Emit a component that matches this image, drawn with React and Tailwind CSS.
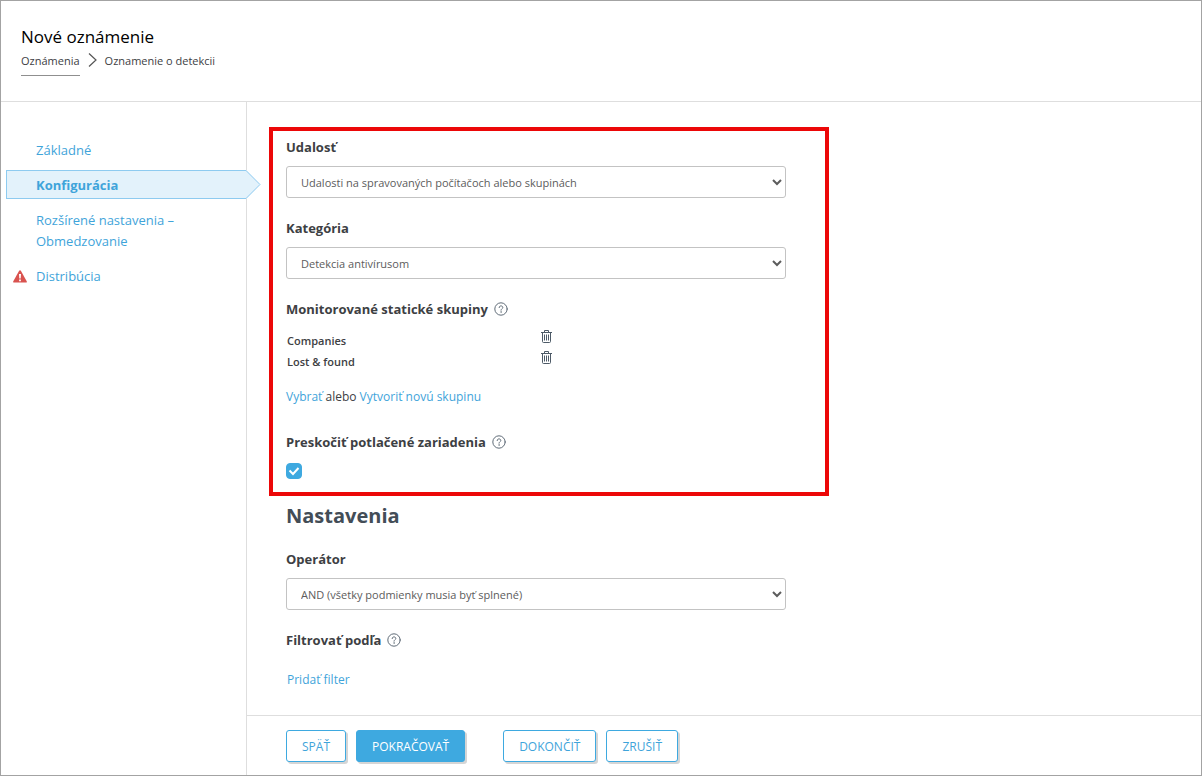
import React from "react";

function HelpButton({ label }) {
  return (
    <button type="button" aria-label={label} className="pb-px text-[#5f6b77]">
      <svg className="block" width="14" height="14" viewBox="0 0 14 14" fill="none" stroke="currentColor" strokeLinecap="round">
        <circle cx="7" cy="7" r="6.200" strokeWidth="1" />
        <path d="M5.200 5.600C5.200 4.500 6 3.900 7 3.900s1.800.6 1.800 1.600C8.800 6.700 7 6.800 7 8.200" strokeWidth="1" />
        <circle cx="7" cy="10" r=".3" strokeWidth=".7" />
      </svg>
    </button>
  );
}

function SelectField({ id, label, options }) {
  return (
    <div className="flex max-w-[500px] flex-col gap-2">
      <label htmlFor={id} className="text-[13px] leading-[21px] font-bold text-[#3d4043]">
        {label}
      </label>
      <div className="relative">
        <select
          id={id}
          className="block h-8 w-full appearance-none rounded-[3px] border border-[#c3c3c3] bg-white pt-0.5 pr-8 pl-3.5 text-[11px] text-[#5c5c5c]"
        >
          {options.map((o) => (
            <option key={o}>{o}</option>
          ))}
        </select>
        <svg
          className="pointer-events-none absolute top-3 right-1"
          width="10"
          height="8"
          viewBox="0 0 10 8"
          fill="none"
          stroke="#5c5c5c"
          strokeWidth="2"
        >
          <path d="M1 2L5 6L9 2" />
        </svg>
      </div>
    </div>
  );
}

function TrashIcon() {
  return (
    <svg width="11" height="13" viewBox="0 0 11 13" fill="none" stroke="#4d5a67">
      <path d="M0 2.500H11M3.500 2.500V.5H7.500V2.500" />
      <path d="M1.500 2.500V11.500Q1.500 12.500 2.500 12.500H8.500Q9.500 12.500 9.500 11.500V2.500" />
      <path d="M3.500 4.500V10.500M5.500 4.500V10.500M7.500 4.500V10.500" />
    </svg>
  );
}

const groups = ["Companies", "Lost & found"];

const link = "text-[#3fa4da]";
const heading = "text-[13px] leading-[21px] font-bold text-[#3d4043]";
const button =
  "h-8 rounded-[3px] border border-[#3ea9e0] px-[15px] pt-0.5 text-[12px] shadow-[2px_2px_0_#d5d5d5]";

function Sidebar() {
  return (
    <nav className="w-[246px] shrink-0 border-r border-[#dedede] pt-[38px] text-[13px] leading-[21px]">
      <ul className="flex flex-col">
        <li className="pr-10 pl-[35px]">
          <a href="#basic" className={link}>Základné</a>
        </li>
        <li className="relative mt-[9px] mb-[11px] ml-[5px] flex h-[29px] items-center border-y border-l border-[#8ecbf0] bg-[#e3f2fb] pt-0.5 pl-[29px]">
          <a href="#configuration" aria-current="page" className="font-bold text-[#3fa4da]">Konfigurácia</a>
          <svg className="absolute -top-px -right-[15px]" width="15" height="29" viewBox="0 0 15 29">
            <path d="M0 0L14 14.500L0 29Z" fill="#e3f2fb" />
            <path d="M0 .5L14 14.500L0 28.500" fill="none" stroke="#8ecbf0" />
          </svg>
        </li>
        <li className="pr-10 pl-[35px]">
          <a href="#advanced" className={link}>Rozšírené nastavenia – Obmedzovanie</a>
        </li>
        <li className="mt-3.5 flex items-center gap-[9px] pl-3">
          <svg width="14" height="13" viewBox="0 0 14 13">
            <path d="M7 .3Q7.600 .3 8 1L13.700 11.300Q14.200 12.500 13 12.500H1Q-.2 12.500 .3 11.300L6 1Q6.400 .3 7 .3Z" fill="#d9534f" />
            <path d="M6 4H8L7.700 8.500H6.300ZM6.100 9.500H7.900V11.200H6.100Z" fill="#fff" />
          </svg>
          <a href="#distribution" className={link}>Distribúcia</a>
        </li>
      </ul>
    </nav>
  );
}

export default function App() {
  return (
    <div className="flex min-h-screen flex-col border border-[#a3a3a3] bg-white font-['Open_Sans','Noto_Sans',sans-serif] text-[#3d4043]">
      <header className="h-[101px] border-b border-[#dedede] px-5 pt-6">
        <h1 className="text-[17px] leading-6 text-black">Nové oznámenie</h1>
        <nav className="flex text-[11px] leading-6">
          <a href="#notifications" className="h-[27px] border-b border-[#8f8f8f]">Oznámenia</a>
          <svg className="mx-2 mt-1" width="9" height="14" viewBox="0 0 9 14" fill="none" stroke="#555" strokeWidth="1.2">
            <path d="M1 .5L8 7L1 13.500" />
          </svg>
          <span>Oznamenie o detekcii</span>
        </nav>
      </header>

      <div className="flex grow">
        <Sidebar />
        <div className="flex min-w-0 grow flex-col">
          <main className="grow px-[22px] py-[25px]">
            <section className="flex max-w-[560px] flex-col border-4 border-[#ec0708] px-[13px] pt-1.5 pb-[13px]">
              <div className="flex flex-col gap-5">
                <SelectField
                  id="event"
                  label="Udalosť"
                  options={["Udalosti na spravovaných počítačoch alebo skupinách"]}
                />
                <SelectField id="category" label="Kategória" options={["Detekcia antivírusom"]} />
                <div>
                  <div className="flex items-center gap-1.5">
                    <h2 className={heading}>Monitorované statické skupiny</h2>
                    <HelpButton label="Pomocník: Monitorované statické skupiny" />
                  </div>
                  <ul className="mt-2.5 pl-px text-[11px] leading-[21px] font-semibold">
                    {groups.map((g) => (
                      <li key={g} className="flex">
                        <span className="w-[254px]">{g}</span>
                        <button type="button" aria-label={`Odstrániť ${g}`} className="mb-2">
                          <TrashIcon />
                        </button>
                      </li>
                    ))}
                  </ul>
                </div>
              </div>
              <p className="mt-3.5 text-[12px] leading-[21px]">
                <a href="#select" className={link}>Vybrať</a> alebo{" "}
                <a href="#create" className={link}>Vytvoriť novú skupinu</a>
              </p>
              <div className="mt-[25px] flex items-center gap-1.5">
                <label htmlFor="skip" className={heading}>Preskočiť potlačené zariadenia</label>
                <HelpButton label="Pomocník: Preskočiť potlačené zariadenia" />
              </div>
              <div className="relative mt-2.5 h-4 w-4">
                <input
                  id="skip"
                  type="checkbox"
                  defaultChecked
                  className="peer block h-4 w-4 appearance-none rounded-[4px] border border-[#3ea9e0] checked:bg-[#3ea9e0]"
                />
                <svg
                  className="pointer-events-none absolute top-0 left-0 hidden peer-checked:block"
                  width="16"
                  height="16"
                  viewBox="0 0 16 16"
                  fill="none"
                  stroke="#fff"
                  strokeWidth="2"
                >
                  <path d="M3.500 7.500L7 11L12.500 5" />
                </svg>
              </div>
            </section>

            <section className="flex flex-col px-[17px] pt-1">
              <h2 className="text-[20px] leading-8 font-bold text-[#434d57]">Nastavenia</h2>
              <div className="mt-[17px] flex flex-col gap-5">
                <SelectField id="operator" label="Operátor" options={["AND (všetky podmienky musia byť splnené)"]} />
                <div className="flex items-center gap-1.5">
                  <h3 className={heading}>Filtrovať podľa</h3>
                  <HelpButton label="Pomocník: Filtrovať podľa" />
                </div>
              </div>
              <a href="#add-filter" className="mt-[18px] self-start pl-px text-[12px] leading-[21px] text-[#3fa4da]">
                Pridať filter
              </a>
            </section>
          </main>

          <footer className="flex h-[60px] border-t border-[#dedede] pt-3.5 pl-[39px]">
            <button type="button" className={`${button} bg-white text-[#3fa4da]`}>SPÄŤ</button>
            <button type="button" className={`${button} ml-2.5 bg-[#3ea9e0] text-white`}>POKRAČOVAŤ</button>
            <button type="button" className={`${button} ml-[38px] bg-white text-[#3fa4da]`}>DOKONČIŤ</button>
            <button type="button" className={`${button} ml-2.5 bg-white text-[#3fa4da]`}>ZRUŠIŤ</button>
          </footer>
        </div>
      </div>
    </div>
  );
}
